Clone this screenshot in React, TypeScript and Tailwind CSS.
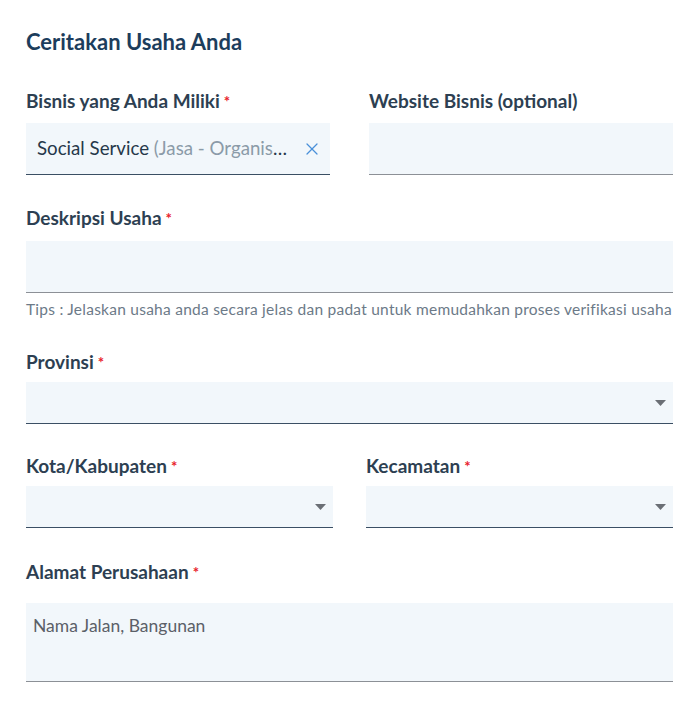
import { X } from 'lucide-react';

function Req() {
  return <span className="ml-[4px] text-[15px] text-[#e8202a] align-top">*</span>;
}

function Label({ children, required }: { children: React.ReactNode; required?: boolean }) {
  return (
    <div className="h-[22px] whitespace-nowrap text-[19px] font-bold leading-[22px] text-[#2d3f52]">
      {children}
      {required && <Req />}
    </div>
  );
}

function Caret() {
  return (
    <svg width="11" height="6" viewBox="0 0 11 6" className="shrink-0">
      <path d="M0 0h11L5.5 6z" fill="#6b6f75" />
    </svg>
  );
}

function Select({ className = '' }: { className?: string }) {
  return (
    <div
      className={`flex h-[42px] items-center justify-end border-b border-[#3b4f64] bg-[#f2f7fb] pr-[7px] ${className}`}
    >
      <Caret />
    </div>
  );
}

export default function App() {
  return (
    <div
      className="w-[697px] min-h-[714px] bg-white pl-[26px] pr-[24px] pt-[30px]"
      style={{ fontFamily: 'Lato, "Open Sans", sans-serif' }}
    >
      <h1 className="h-[24px] text-[22px] font-bold leading-[24px] text-[#1c3d5c]">Ceritakan Usaha Anda</h1>

      <div className="mt-[36px] flex gap-[39px]">
        <div className="w-[304px]">
          <Label required>Bisnis yang Anda Miliki</Label>
          <div className="mt-[11px] flex h-[52px] items-center border-b border-[#3b4f64] bg-[#f2f7fb] pl-[11px] pr-[8px]">
            <span className="min-w-0 flex-1 truncate text-[18.7px] text-[#26384a]">
              Social Service <span className="text-[#8b9ba8]">(Jasa - Organisasi Sosial)</span>
            </span>
            <X className="ml-[14px] h-[20px] w-[20px] shrink-0 text-[#4a90d9]" strokeWidth={1.5} />
          </div>
        </div>
        <div className="w-[304px]">
          <Label>Website Bisnis (optional)</Label>
          <div className="mt-[11px] h-[52px] border-b border-[#8c9096] bg-[#f2f7fb]" />
        </div>
      </div>

      <div className="mt-[32px]">
        <Label required>Deskripsi Usaha</Label>
        <div className="mt-[12px] h-[52px] border-b border-[#8c9096] bg-[#f2f7fb]" />
        <p className="mt-[7px] h-[18px] whitespace-nowrap text-[15.5px] leading-[18px] tracking-[0.25px] text-[#6c7a88]">
          Tips : Jelaskan usaha anda secara jelas dan padat untuk memudahkan proses verifikasi usaha
        </p>
      </div>

      <div className="mt-[33px]">
        <Label required>Provinsi</Label>
        <Select className="mt-[9px]" />
      </div>

      <div className="mt-[31px] flex gap-[33px]">
        <div className="w-[307px]">
          <Label required>Kota/Kabupaten</Label>
          <Select className="mt-[9px]" />
        </div>
        <div className="w-[307px]">
          <Label required>Kecamatan</Label>
          <Select className="mt-[9px]" />
        </div>
      </div>

      <div className="mt-[33px]">
        <Label required>Alamat Perusahaan</Label>
        <div className="mt-[20px] h-[79px] border-b border-[#8c9096] bg-[#f2f7fb] px-[7px] pt-[12px] text-[17.5px] leading-[22px] text-[#5b6068]">
          Nama Jalan, Bangunan
        </div>
      </div>
    </div>
  );
}
